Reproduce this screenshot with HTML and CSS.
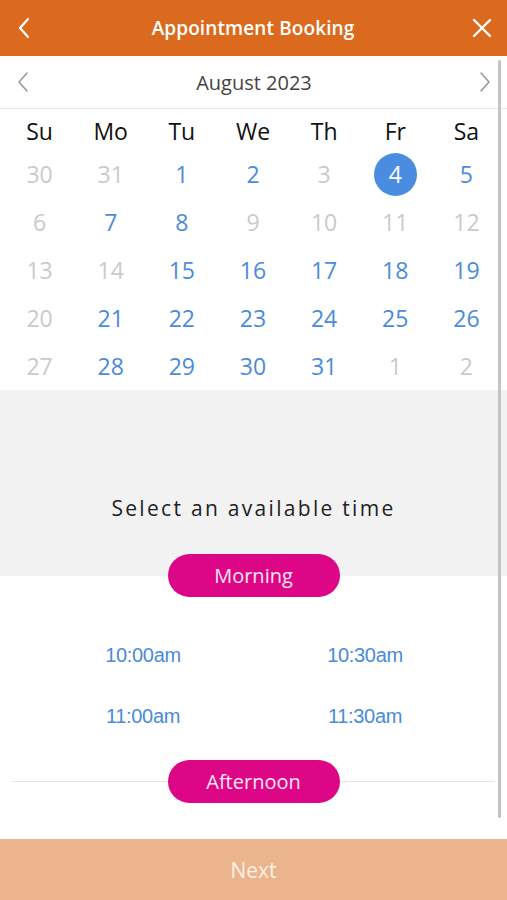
FILE: index.html
```html
<!DOCTYPE html>
<html lang="en">
<head>
    <meta charset="UTF-8">
    <meta name="viewport" content="width=device-width, initial-scale=1.0">
    <title>Appointment Booking</title>
    <link rel="stylesheet" href="styles.css">
</head>
<body>
    <div class="app">
        <header class="top-bar">
            <button class="icon-btn" aria-label="Back">
                <svg width="14" height="24" viewBox="0 0 14 24"><path d="M11 3 L3 12 L11 21" fill="none" stroke="#fff" stroke-width="2.2" stroke-linecap="round" stroke-linejoin="round"/></svg>
            </button>
            <h1>Appointment Booking</h1>
            <button class="icon-btn" aria-label="Close">
                <svg width="20" height="20" viewBox="0 0 20 20"><path d="M2 2 L18 18 M18 2 L2 18" fill="none" stroke="#fff" stroke-width="2.4" stroke-linecap="round"/></svg>
            </button>
        </header>

        <div class="content">
            <div class="month-bar">
                <button class="nav-btn" aria-label="Previous month">
                    <svg width="12" height="22" viewBox="0 0 12 22"><path d="M10 2 L2 11 L10 20" fill="none" stroke="#9a9a9a" stroke-width="1.6" stroke-linecap="round" stroke-linejoin="round"/></svg>
                </button>
                <span class="month-label">August 2023</span>
                <button class="nav-btn" aria-label="Next month">
                    <svg width="12" height="22" viewBox="0 0 12 22"><path d="M2 2 L10 11 L2 20" fill="none" stroke="#9a9a9a" stroke-width="1.6" stroke-linecap="round" stroke-linejoin="round"/></svg>
                </button>
            </div>

            <div class="weekdays">
                <span>Su</span><span>Mo</span><span>Tu</span><span>We</span><span>Th</span><span>Fr</span><span>Sa</span>
            </div>

            <div class="dates">
                <span class="off">30</span><span class="off">31</span><span>1</span><span>2</span><span class="off">3</span><span class="selected"><b>4</b></span><span>5</span>
                <span class="off">6</span><span>7</span><span>8</span><span class="off">9</span><span class="off">10</span><span class="off">11</span><span class="off">12</span>
                <span class="off">13</span><span class="off">14</span><span>15</span><span>16</span><span>17</span><span>18</span><span>19</span>
                <span class="off">20</span><span>21</span><span>22</span><span>23</span><span>24</span><span>25</span><span>26</span>
                <span class="off">27</span><span>28</span><span>29</span><span>30</span><span>31</span><span class="off">1</span><span class="off">2</span>
            </div>

            <div class="time-intro">
                <p>Select an available time</p>
            </div>

            <div class="period first">
                <span class="pill">Morning</span>
            </div>

            <div class="slots">
                <a href="#">10:00am</a>
                <a href="#">10:30am</a>
                <a href="#">11:00am</a>
                <a href="#">11:30am</a>
            </div>

            <div class="period divided">
                <span class="pill">Afternoon</span>
            </div>

            <div class="scrollbar"></div>
        </div>

        <button class="next-btn">Next</button>
    </div>
</body>
</html>
```

FILE: styles.css
```css
* {
    box-sizing: border-box;
}
body {
    margin: 0;
    font-family: "Open Sans", Arial, sans-serif;
    background: #fff;
}
button {
    font-family: inherit;
    border: none;
    background: none;
    padding: 0;
    cursor: pointer;
}
.app {
    display: flex;
    flex-direction: column;
    height: 100vh;
}
.top-bar {
    height: 56px;
    flex-shrink: 0;
    background-color: #dc6a1e;
    display: flex;
    align-items: center;
    justify-content: space-between;
    padding: 0 14px 0 13px;
}
.top-bar h1 {
    margin: 0;
    color: #fff;
    font-size: 19px;
    font-weight: 600;
    letter-spacing: 0.1px;
}
.icon-btn {
    display: flex;
    align-items: center;
    width: 22px;
    justify-content: center;
}
.content {
    flex: 1;
    position: relative;
    overflow: hidden;
}
.month-bar {
    height: 53px;
    display: flex;
    align-items: center;
    justify-content: space-between;
    padding: 0 16px 0 17px;
    border-bottom: 1px solid #e6e6e6;
}
.month-label {
    font-size: 20px;
    color: #444;
}
.nav-btn {
    display: flex;
    align-items: center;
}
.weekdays,
.dates {
    display: grid;
    grid-template-columns: repeat(7, 1fr);
    padding: 0 5px 0 4px;
    text-align: center;
}
.weekdays {
    padding-top: 3px;
    line-height: 38px;
    font-size: 23px;
    color: #111;
}
.dates span {
    height: 48px;
    display: flex;
    align-items: center;
    justify-content: center;
    font-size: 23px;
    color: #4a8bdb;
}
.dates span.off {
    color: #cacaca;
}
.dates .selected b {
    width: 43px;
    height: 43px;
    border-radius: 50%;
    background-color: #4a8de0;
    color: #fff;
    font-weight: normal;
    display: flex;
    align-items: center;
    justify-content: center;
}
.time-intro {
    background-color: #f2f2f2;
    padding: 104px 0 54px;
    text-align: center;
}
.time-intro p {
    margin: 0;
    line-height: 28px;
    font-size: 21px;
    letter-spacing: 2.3px;
    color: #222;
}
.period {
    display: flex;
    align-items: center;
    padding: 0 12px;
}
.period.first {
    margin-top: -22px;
    justify-content: center;
}
.period.divided::before,
.period.divided::after {
    content: "";
    flex: 1;
    height: 1px;
    background-color: #e6e6e6;
}
.period.divided {
    margin-top: 13px;
}
.pill {
    width: 172px;
    height: 43px;
    border-radius: 22px;
    background-color: #dc0686;
    color: #fde6f3;
    font-size: 20px;
    display: flex;
    align-items: center;
    justify-content: center;
}
.slots {
    display: grid;
    grid-template-columns: 1fr 1fr;
    padding: 28px 31px 0 32px;
    text-align: center;
}
.slots a {
    height: 61px;
    line-height: 61px;
    font-family: "Liberation Sans", Arial, sans-serif;
    font-size: 20px;
    color: #4a8bdb;
    text-decoration: none;
    letter-spacing: -0.3px;
}
.scrollbar {
    position: absolute;
    top: 4px;
    right: 6px;
    width: 3px;
    height: 758px;
    border-radius: 2px;
    background-color: #c4c4c4;
}
.next-btn {
    height: 61px;
    flex-shrink: 0;
    width: 100%;
    background-color: #ecb48c;
    color: #fdf3e6;
    font-size: 21px;
}
```
